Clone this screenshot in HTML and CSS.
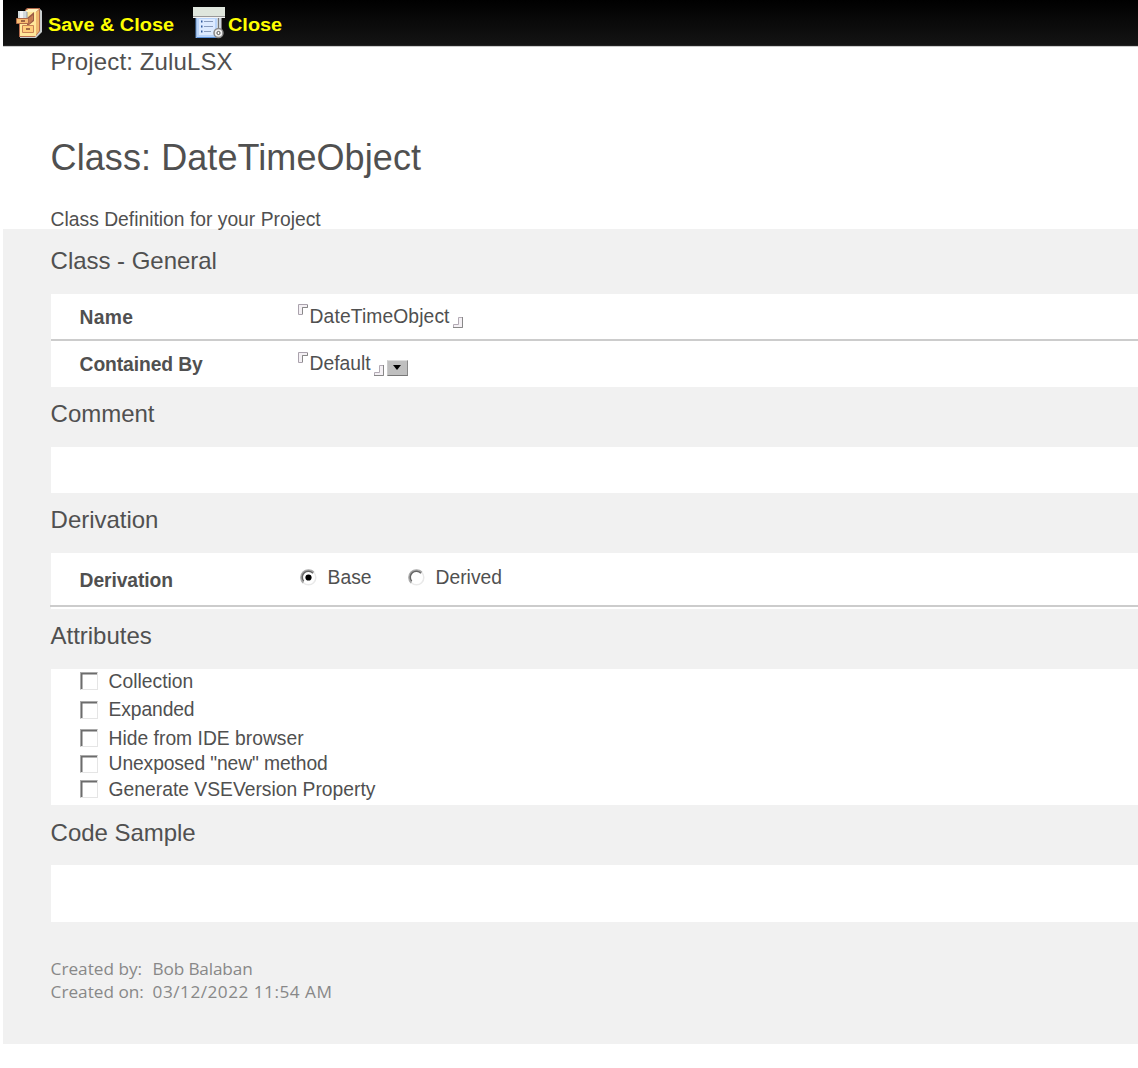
FILE: index.html
```html
<!DOCTYPE html>
<html lang="en">
<head>
<meta charset="utf-8">
<title>Class: DateTimeObject</title>
<link rel="stylesheet" href="styles.css">
</head>
<body>
<svg class="symbols" width="0" height="0" aria-hidden="true">
  <symbol id="open" viewBox="0 0 10 11"><path d="M.5 10.500V.5H9.500V3.500H4.500V10.500Z" fill="#f4f0f4" stroke="#aaa2ad"/><path d="M9.500 1V3.500H4.500V10" fill="none" stroke="#888" /></symbol>
  <symbol id="close" viewBox="0 0 10 11"><path d="M9.500 .5V10.500H.5V7.500H5.500V.5Z" fill="#f4f0f4" stroke="#b3abb5"/><path d="M9.500 0V10.500H0" fill="none" stroke="#888"/></symbol>
  <symbol id="radio" viewBox="0 0 17 17"><circle cx="8.500" cy="8.500" r="7.300" fill="#fff" stroke="#e9e9e9" stroke-width="1.500"/><path d="M3.200 13.800A7.400 7.400 0 0 1 13.800 3.200" fill="none" stroke="#aaa" stroke-width="1.700"/><path d="M3.700 12.200A6.100 6.100 0 0 1 13 4.300" fill="none" stroke="#666" stroke-width="1.500"/></symbol>
</svg>
<main class="form">
  <nav class="toolbar">
    <a class="action save">
      <svg width="28" height="32" viewBox="0 0 28 32">
        <path d="M20 4L24 2L26 4V25L20 31L4 31V28Z" fill="#c9cfcf"/>
        <path d="M9 3L11 1H24V24L19 30H3V17H9Z" fill="#b56b4c"/>
        <path d="M10 3H20V29H4V17H10Z" fill="#ffe79a"/>
        <path d="M12 2H23L20 5H10Z" fill="#fff1bd"/>
        <path d="M20 5L23 3V24L20 28Z" fill="#efb96f"/>
        <path d="M18 5V14L13 18H11V11Z" fill="#9b5b45"/><path d="M17 8V13L13 16V12Z" fill="#c98358"/>
        <path d="M2 4H11V12H2Z" fill="#d2dadc"/><path d="M4 4H7V12H4Z" fill="#f3f5f5"/><path d="M11 5V12" stroke="#929b9e"/>
        <path d="M.5 11.500H12.500V16.500H.5Z" fill="#f8bd72" stroke="#b06b49"/><path d="M13 11L16 9V14L13 17Z" fill="#c47a50"/>
        <path d="M6.500 18.500H17.500V25.500H6.500Z" fill="#ffce7b" stroke="#c98255"/>
        <path d="M5 14H9M10 22H14" stroke="#804936" stroke-width="1.500"/>
      </svg>
      <span class="caption">Save &amp; Close</span>
    </a>
    <a class="action">
      <svg width="32" height="32" viewBox="0 0 32 32">
        <path d="M3 10H29V29H27V31H3Z" fill="#cbd4dc"/>
        <path d="M4 10H24V31H4Z" fill="#b9d4fa"/><path d="M6 12H22V28H6Z" fill="#dceaff"/>
        <path d="M3 10V31M4 30.500H24" stroke="#5c93dc"/>
        <path d="M25.500 10V27M28.500 10V28" stroke="#777"/>
        <path d="M0 0H32V9H0Z" fill="#dfe6dd"/><path d="M0 9.500H32" stroke="#999"/><path d="M0 10.500H32" stroke="#f3f3f3"/>
        <path d="M11 14.500H20M11 19.500H20M11 24.500H18" stroke="#879bbd"/><path d="M8 14.500H9.500M8 19.500H9.500M8 24.500H9.500" stroke="#315a9e" stroke-width="2"/>
        <circle cx="25.500" cy="26" r="4.500" fill="#eee" stroke="#888" stroke-width="1.500"/><circle cx="25.500" cy="26" r="1.600" fill="#fff" stroke="#555"/>
      </svg>
      <span class="caption">Close</span>
    </a>
  </nav>
  <header class="intro">
    <p class="project">Project: ZuluLSX</p>
    <h1>Class: DateTimeObject</h1>
    <p class="subtitle">Class Definition for your Project</p>
  </header>
  <div class="sections">
    <section>
      <h2>Class - General</h2>
      <div class="panel">
        <div class="row ruled"><b class="wide">Name</b><div class="field"><svg class="corner"><use href="#open"/></svg><span class="name">DateTimeObject</span><svg class="corner end"><use href="#close"/></svg></div></div>
        <div class="row"><b>Contained By</b><div class="field"><svg class="corner"><use href="#open"/></svg><span>Default</span><svg class="corner end"><use href="#close"/></svg><button class="dropdown" aria-label="Choose"><svg width="8" height="5" viewBox="0 0 8 5"><path d="M0 0H8L4 5Z"/></svg></button></div></div>
      </div>
    </section>
    <section>
      <h2>Comment</h2>
      <div class="panel comment"></div>
    </section>
    <section>
      <h2>Derivation</h2>
      <div class="panel derivation">
        <div class="row"><b>Derivation</b><div class="radios">
          <span class="option"><svg width="17" height="17" viewBox="0 0 17 17"><use href="#radio"/><circle cx="8.500" cy="8.500" r="3.100"/></svg><span>Base</span></span>
          <span class="option"><svg width="17" height="17"><use href="#radio"/></svg><span>Derived</span></span>
        </div></div>
      </div>
    </section>
    <section>
      <h2>Attributes</h2>
      <ul class="panel attributes">
        <li><i class="box"></i><span>Collection</span></li>
        <li><i class="box"></i><span class="tight">Expanded</span></li>
        <li><i class="box"></i><span>Hide from IDE browser</span></li>
        <li><i class="box"></i><span class="tight">Unexposed "new" method</span></li>
        <li><i class="box"></i><span>Generate VSEVersion Property</span></li>
      </ul>
    </section>
    <section>
      <h2 class="low">Code Sample</h2>
      <div class="panel code"></div>
    </section>
    <footer>
      <div class="by"><span>Created by:</span><span>Bob Balaban</span></div>
      <div class="on"><span>Created on:</span><span>03/12/2022 11:54 AM</span></div>
    </footer>
  </div>
</main>
</body>
</html>
```
FILE: styles.css
```css
* { box-sizing: border-box; }
body { margin: 0; background: #fff; color: #505050; font: 19.3px/24px "Liberation Sans", Arial, sans-serif; }
.symbols { display: none; }
.form { margin-left: 2.6px; }
h1, h2, p, ul { margin: 0; padding: 0; font-weight: normal; }

.toolbar { display: flex; height: 46px; padding: 7px 0 0 13.4px; gap: 19px; background: linear-gradient(#000, #141414); border-bottom: 1px solid #222; box-shadow: 0 1px #ccc; }
.action { display: flex; align-items: flex-start; gap: 3px; color: #ff0; font-weight: bold; font-size: 18px; line-height: 36px; }
.save { width: 158px; gap: 4px; }
.caption { transform: scaleX(1.105); transform-origin: left; white-space: nowrap; }

.intro { height: 183px; padding-left: 48px; }
.project { font-size: 24px; line-height: 31px; letter-spacing: .13px; }
h1 { margin-top: 58px; font-size: 36px; line-height: 45px; letter-spacing: .08px; }
.subtitle { margin-top: 30px; line-height: 20px; }

.sections { height: 815px; padding: 4.5px 0 0 48px; background: #f1f1f1; }
h2 { height: 60px; font-size: 24px; line-height: 54px; letter-spacing: -.03px; }
.low { line-height: 55px; }
.panel { background: #fff; }
.row { display: grid; grid-template-columns: 218px 1fr; height: 46px; padding-left: 29px; }
.row b { line-height: 48px; letter-spacing: -.1px; }
.row .wide { letter-spacing: .3px; }
.ruled { height: 47.5px; border-bottom: 2px solid #ccc; }
.field { display: flex; height: 46px; align-items: center; gap: 3px; }
.field .name { letter-spacing: .1px; }
.corner { width: 10px; height: 11px; margin: 0 -1px 14px 0; }
.end { margin: 12px -1px 0 0; }
.dropdown { display: flex; align-items: center; justify-content: center; width: 21px; height: 16px; margin-top: 7px; margin-left: 1px; padding: 0; background: #bfbfbf; border: 1px solid; border-color: #ddd #888 #777 #ccc; }

.comment { height: 46px; }
.derivation { height: 56px; }
.derivation .row { height: 54px; margin-left: -1px; padding-left: 30px; border-bottom: 2px solid #ccc; }
.derivation b { line-height: 55px; }
.radios { display: flex; gap: 36px; padding-left: 2px; height: 48px; align-items: center; }
.option { display: flex; gap: 11px; align-items: center; }
.option span { padding-top: 1px; }

.attributes { height: 136px; padding-left: 29.5px; list-style: none; }
.attributes li { display: flex; align-items: center; gap: 10.5px; height: 24px; margin-bottom: 1.5px; }
.attributes li:nth-child(-n+2) { margin-bottom: 4.5px; }
.attributes span { padding-top: 1px; }
.attributes .tight { letter-spacing: -.12px; }
.box { width: 18px; height: 18px; background: #fff; border: 1px solid; border-color: #aaa #e5e5e5 #e5e5e5 #aaa; box-shadow: inset 1.5px 1.5px #6c6c6c; }
.code { height: 57px; }

footer { padding-top: 36px; color: #888; font: 17.2px/22.5px "Open Sans", sans-serif; }
footer div { display: grid; grid-template-columns: 102px 1fr; }
.by span:last-child { letter-spacing: -.15px; }
.on span:last-child { letter-spacing: .5px; }
```
